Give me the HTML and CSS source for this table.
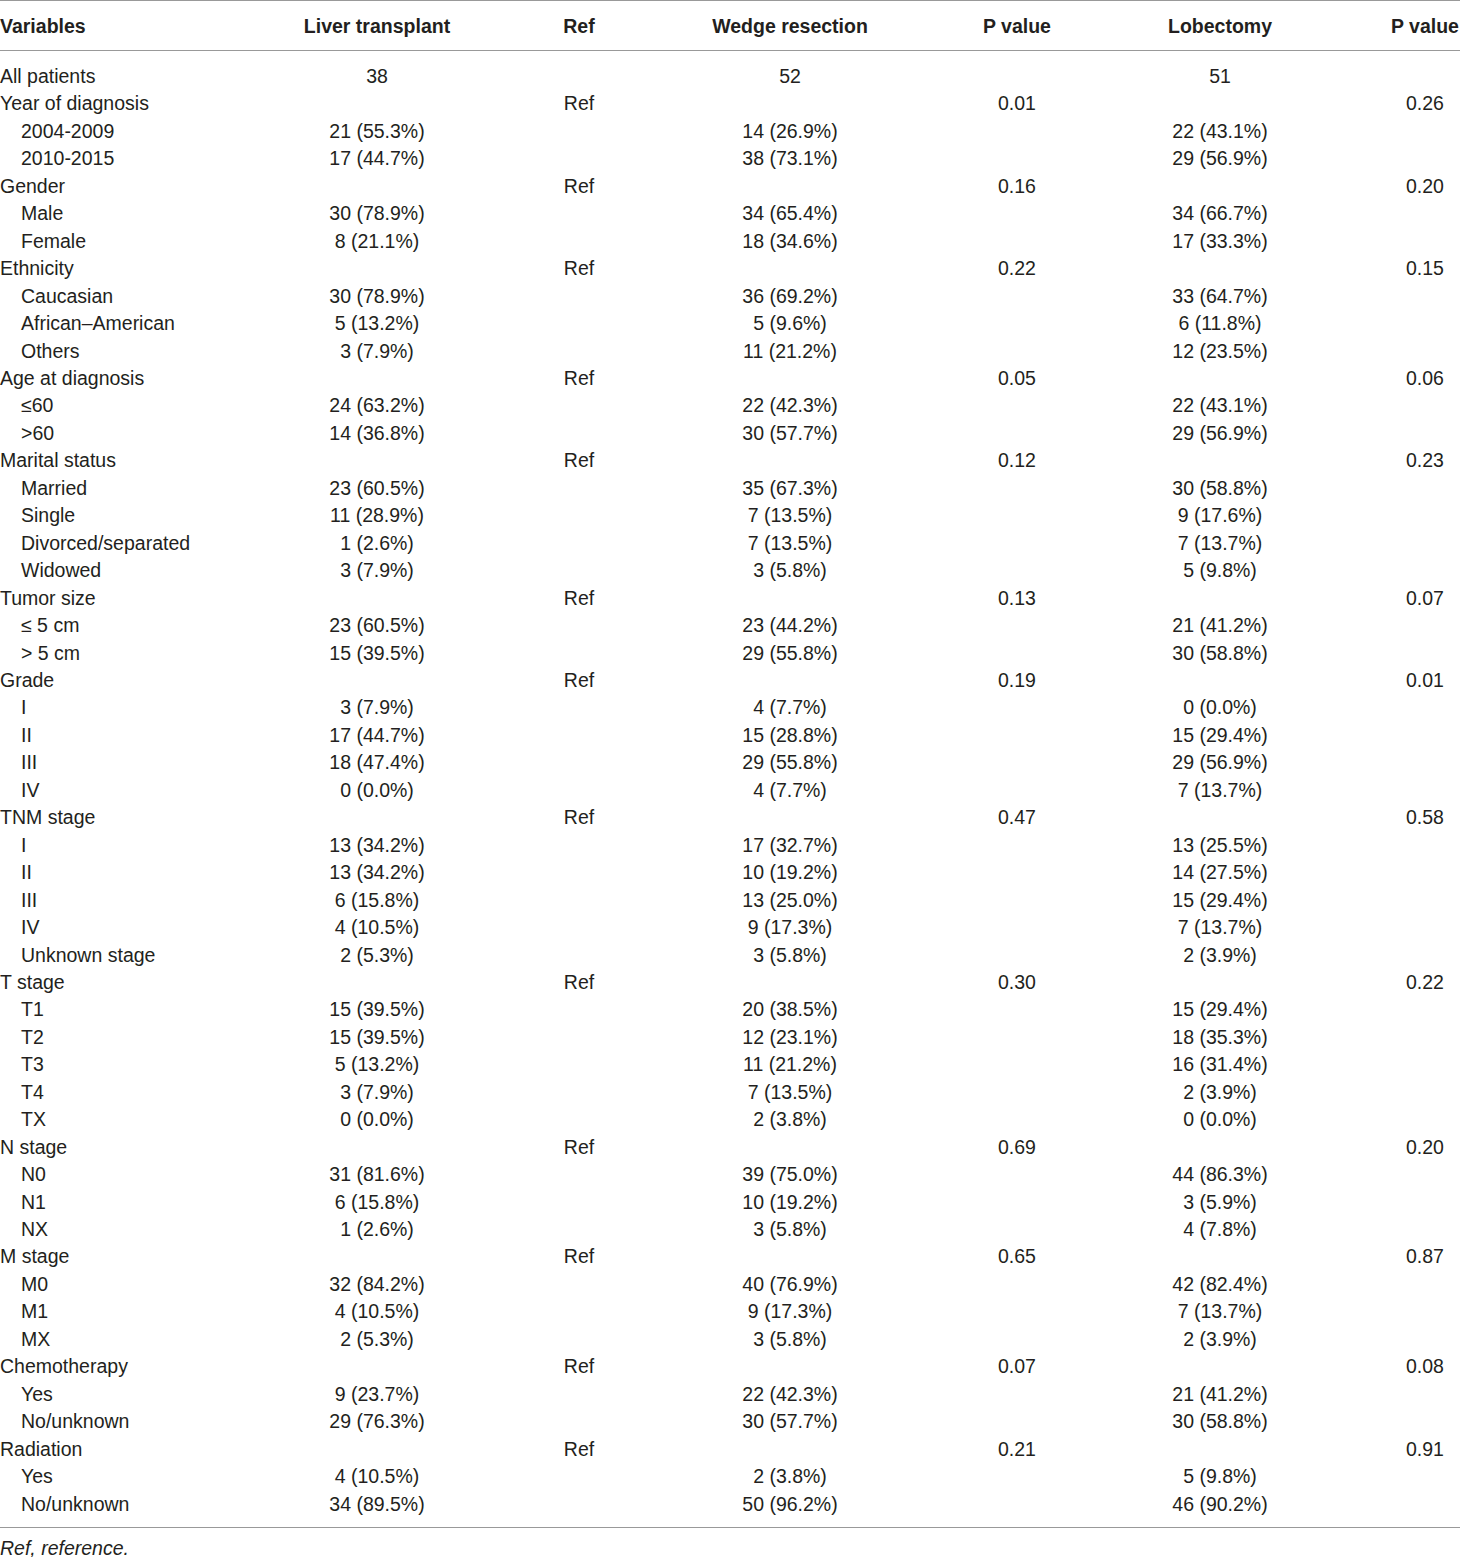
FILE: index.html
```html
<!DOCTYPE html>
<html lang="en">
    <head>
        <meta charset="UTF-8" />
        <meta name="viewport" content="width=device-width, initial-scale=1.0" />
        <title>Patient characteristics</title>
        <link rel="stylesheet" href="styles.css">
    </head>
    <body>
        <div class="table-wrap">
            <table class="data-table">
                <colgroup>
                    <col class="col-var">
                    <col class="col-liver">
                    <col class="col-ref">
                    <col class="col-wedge">
                    <col class="col-p1">
                    <col class="col-lobe">
                    <col class="col-p2">
                </colgroup>
                <thead>
                    <tr>
                        <th class="label">Variables</th>
                        <th>Liver transplant</th>
                        <th>Ref</th>
                        <th>Wedge resection</th>
                        <th>P value</th>
                        <th>Lobectomy</th>
                        <th>P value</th>
                    </tr>
                </thead>
                <tbody>
                    <tr><td class="label">All patients</td><td>38</td><td></td><td>52</td><td></td><td>51</td><td></td></tr>
                    <tr><td class="label">Year of diagnosis</td><td></td><td>Ref</td><td></td><td>0.01</td><td></td><td>0.26</td></tr>
                    <tr><td class="label sub">2004-2009</td><td>21 (55.3%)</td><td></td><td>14 (26.9%)</td><td></td><td>22 (43.1%)</td><td></td></tr>
                    <tr><td class="label sub">2010-2015</td><td>17 (44.7%)</td><td></td><td>38 (73.1%)</td><td></td><td>29 (56.9%)</td><td></td></tr>
                    <tr><td class="label">Gender</td><td></td><td>Ref</td><td></td><td>0.16</td><td></td><td>0.20</td></tr>
                    <tr><td class="label sub">Male</td><td>30 (78.9%)</td><td></td><td>34 (65.4%)</td><td></td><td>34 (66.7%)</td><td></td></tr>
                    <tr><td class="label sub">Female</td><td>8 (21.1%)</td><td></td><td>18 (34.6%)</td><td></td><td>17 (33.3%)</td><td></td></tr>
                    <tr><td class="label">Ethnicity</td><td></td><td>Ref</td><td></td><td>0.22</td><td></td><td>0.15</td></tr>
                    <tr><td class="label sub">Caucasian</td><td>30 (78.9%)</td><td></td><td>36 (69.2%)</td><td></td><td>33 (64.7%)</td><td></td></tr>
                    <tr><td class="label sub">African–American</td><td>5 (13.2%)</td><td></td><td>5 (9.6%)</td><td></td><td>6 (11.8%)</td><td></td></tr>
                    <tr><td class="label sub">Others</td><td>3 (7.9%)</td><td></td><td>11 (21.2%)</td><td></td><td>12 (23.5%)</td><td></td></tr>
                    <tr><td class="label">Age at diagnosis</td><td></td><td>Ref</td><td></td><td>0.05</td><td></td><td>0.06</td></tr>
                    <tr><td class="label sub">≤60</td><td>24 (63.2%)</td><td></td><td>22 (42.3%)</td><td></td><td>22 (43.1%)</td><td></td></tr>
                    <tr><td class="label sub">&gt;60</td><td>14 (36.8%)</td><td></td><td>30 (57.7%)</td><td></td><td>29 (56.9%)</td><td></td></tr>
                    <tr><td class="label">Marital status</td><td></td><td>Ref</td><td></td><td>0.12</td><td></td><td>0.23</td></tr>
                    <tr><td class="label sub">Married</td><td>23 (60.5%)</td><td></td><td>35 (67.3%)</td><td></td><td>30 (58.8%)</td><td></td></tr>
                    <tr><td class="label sub">Single</td><td>11 (28.9%)</td><td></td><td>7 (13.5%)</td><td></td><td>9 (17.6%)</td><td></td></tr>
                    <tr><td class="label sub">Divorced/separated</td><td>1 (2.6%)</td><td></td><td>7 (13.5%)</td><td></td><td>7 (13.7%)</td><td></td></tr>
                    <tr><td class="label sub">Widowed</td><td>3 (7.9%)</td><td></td><td>3 (5.8%)</td><td></td><td>5 (9.8%)</td><td></td></tr>
                    <tr><td class="label">Tumor size</td><td></td><td>Ref</td><td></td><td>0.13</td><td></td><td>0.07</td></tr>
                    <tr><td class="label sub">≤ 5 cm</td><td>23 (60.5%)</td><td></td><td>23 (44.2%)</td><td></td><td>21 (41.2%)</td><td></td></tr>
                    <tr><td class="label sub">&gt; 5 cm</td><td>15 (39.5%)</td><td></td><td>29 (55.8%)</td><td></td><td>30 (58.8%)</td><td></td></tr>
                    <tr><td class="label">Grade</td><td></td><td>Ref</td><td></td><td>0.19</td><td></td><td>0.01</td></tr>
                    <tr><td class="label sub">I</td><td>3 (7.9%)</td><td></td><td>4 (7.7%)</td><td></td><td>0 (0.0%)</td><td></td></tr>
                    <tr><td class="label sub">II</td><td>17 (44.7%)</td><td></td><td>15 (28.8%)</td><td></td><td>15 (29.4%)</td><td></td></tr>
                    <tr><td class="label sub">III</td><td>18 (47.4%)</td><td></td><td>29 (55.8%)</td><td></td><td>29 (56.9%)</td><td></td></tr>
                    <tr><td class="label sub">IV</td><td>0 (0.0%)</td><td></td><td>4 (7.7%)</td><td></td><td>7 (13.7%)</td><td></td></tr>
                    <tr><td class="label">TNM stage</td><td></td><td>Ref</td><td></td><td>0.47</td><td></td><td>0.58</td></tr>
                    <tr><td class="label sub">I</td><td>13 (34.2%)</td><td></td><td>17 (32.7%)</td><td></td><td>13 (25.5%)</td><td></td></tr>
                    <tr><td class="label sub">II</td><td>13 (34.2%)</td><td></td><td>10 (19.2%)</td><td></td><td>14 (27.5%)</td><td></td></tr>
                    <tr><td class="label sub">III</td><td>6 (15.8%)</td><td></td><td>13 (25.0%)</td><td></td><td>15 (29.4%)</td><td></td></tr>
                    <tr><td class="label sub">IV</td><td>4 (10.5%)</td><td></td><td>9 (17.3%)</td><td></td><td>7 (13.7%)</td><td></td></tr>
                    <tr><td class="label sub">Unknown stage</td><td>2 (5.3%)</td><td></td><td>3 (5.8%)</td><td></td><td>2 (3.9%)</td><td></td></tr>
                    <tr><td class="label">T stage</td><td></td><td>Ref</td><td></td><td>0.30</td><td></td><td>0.22</td></tr>
                    <tr><td class="label sub">T1</td><td>15 (39.5%)</td><td></td><td>20 (38.5%)</td><td></td><td>15 (29.4%)</td><td></td></tr>
                    <tr><td class="label sub">T2</td><td>15 (39.5%)</td><td></td><td>12 (23.1%)</td><td></td><td>18 (35.3%)</td><td></td></tr>
                    <tr><td class="label sub">T3</td><td>5 (13.2%)</td><td></td><td>11 (21.2%)</td><td></td><td>16 (31.4%)</td><td></td></tr>
                    <tr><td class="label sub">T4</td><td>3 (7.9%)</td><td></td><td>7 (13.5%)</td><td></td><td>2 (3.9%)</td><td></td></tr>
                    <tr><td class="label sub">TX</td><td>0 (0.0%)</td><td></td><td>2 (3.8%)</td><td></td><td>0 (0.0%)</td><td></td></tr>
                    <tr><td class="label">N stage</td><td></td><td>Ref</td><td></td><td>0.69</td><td></td><td>0.20</td></tr>
                    <tr><td class="label sub">N0</td><td>31 (81.6%)</td><td></td><td>39 (75.0%)</td><td></td><td>44 (86.3%)</td><td></td></tr>
                    <tr><td class="label sub">N1</td><td>6 (15.8%)</td><td></td><td>10 (19.2%)</td><td></td><td>3 (5.9%)</td><td></td></tr>
                    <tr><td class="label sub">NX</td><td>1 (2.6%)</td><td></td><td>3 (5.8%)</td><td></td><td>4 (7.8%)</td><td></td></tr>
                    <tr><td class="label">M stage</td><td></td><td>Ref</td><td></td><td>0.65</td><td></td><td>0.87</td></tr>
                    <tr><td class="label sub">M0</td><td>32 (84.2%)</td><td></td><td>40 (76.9%)</td><td></td><td>42 (82.4%)</td><td></td></tr>
                    <tr><td class="label sub">M1</td><td>4 (10.5%)</td><td></td><td>9 (17.3%)</td><td></td><td>7 (13.7%)</td><td></td></tr>
                    <tr><td class="label sub">MX</td><td>2 (5.3%)</td><td></td><td>3 (5.8%)</td><td></td><td>2 (3.9%)</td><td></td></tr>
                    <tr><td class="label">Chemotherapy</td><td></td><td>Ref</td><td></td><td>0.07</td><td></td><td>0.08</td></tr>
                    <tr><td class="label sub">Yes</td><td>9 (23.7%)</td><td></td><td>22 (42.3%)</td><td></td><td>21 (41.2%)</td><td></td></tr>
                    <tr><td class="label sub">No/unknown</td><td>29 (76.3%)</td><td></td><td>30 (57.7%)</td><td></td><td>30 (58.8%)</td><td></td></tr>
                    <tr><td class="label">Radiation</td><td></td><td>Ref</td><td></td><td>0.21</td><td></td><td>0.91</td></tr>
                    <tr><td class="label sub">Yes</td><td>4 (10.5%)</td><td></td><td>2 (3.8%)</td><td></td><td>5 (9.8%)</td><td></td></tr>
                    <tr><td class="label sub">No/unknown</td><td>34 (89.5%)</td><td></td><td>50 (96.2%)</td><td></td><td>46 (90.2%)</td><td></td></tr>
                </tbody>
            </table>
        </div>
        <p class="footnote">Ref, reference.</p>
    </body>
</html>
```

FILE: styles.css
```css
body {
    font-family: "Liberation Sans", Arial, sans-serif;
    font-size: 19.5px;
    color: #231f20;
    margin: 0;
    background-color: #fff;
}
.table-wrap {
    width: 100%;
    overflow: hidden;
}
.data-table {
    width: 1538px;
    table-layout: fixed;
    border-collapse: collapse;
}
.col-var {
    width: 270px;
}
.col-liver {
    width: 214px;
}
.col-ref {
    width: 190px;
}
.col-wedge {
    width: 232px;
}
.col-p1 {
    width: 222px;
}
.col-lobe {
    width: 184px;
}
.col-p2 {
    width: 226px;
}
.data-table th {
    height: 48px;
    padding: 1px 0 0;
    font-weight: bold;
    text-align: center;
    vertical-align: middle;
    border-top: 1px solid #999;
    border-bottom: 1px solid #999;
    white-space: nowrap;
}
.data-table td {
    padding: 0;
    line-height: 27.46px;
    text-align: center;
    white-space: nowrap;
}
.data-table .label {
    text-align: left;
}
.data-table .sub {
    padding-left: 21px;
}
.data-table tbody tr:first-child td {
    padding-top: 12px;
}
.data-table tbody tr:last-child td {
    padding-bottom: 9px;
    border-bottom: 1px solid #999;
}
.footnote {
    margin: 0;
    padding-top: 7px;
    font-style: italic;
    line-height: 26px;
}
```
